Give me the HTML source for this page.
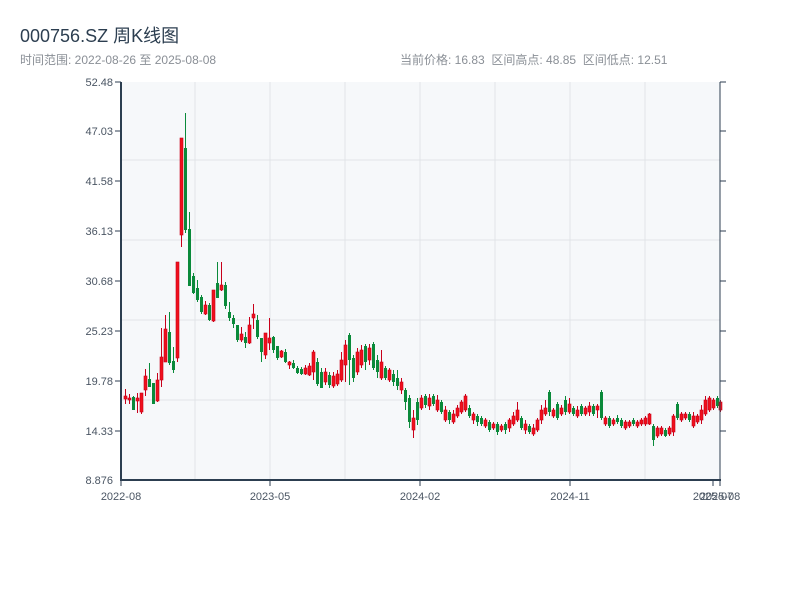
<!DOCTYPE html>
<html><head><meta charset="utf-8"><style>
body{margin:0;background:#fff;width:800px;height:600px;overflow:hidden;font-family:"Liberation Sans","Noto Sans CJK SC",sans-serif;}
.t{position:absolute;left:20px;top:22px;font-size:18px;color:#2c3e50;}
.s{position:absolute;top:51px;font-size:12px;color:#8a8f96;}
svg{position:absolute;left:0;top:0}
.r{fill:#f0101c;stroke:#c8001a;stroke-width:0.6}
.g{fill:#0a8a3a}
.wr{stroke:#c8001a;stroke-width:1}
.wg{stroke:#0a8a3a;stroke-width:1}
.ax{font-size:11px;fill:#4a5563;font-family:"Liberation Sans",sans-serif}
</style></head><body>
<div class="t">000756.SZ 周K线图</div>
<div class="s" style="left:20px">时间范围: 2022-08-26 至 2025-08-08</div>
<div class="s" style="left:400px">当前价格: 16.83&nbsp;&nbsp;区间高点: 48.85&nbsp;&nbsp;区间低点: 12.51</div>
<svg width="800" height="600" xmlns="http://www.w3.org/2000/svg">
<rect x="121" y="82" width="599" height="398" fill="#f6f8fa"/>
<g stroke="#e1e4e8" stroke-width="1">
<line x1="121" x2="720" y1="160" y2="160"/><line x1="121" x2="720" y1="240" y2="240"/><line x1="121" x2="720" y1="320" y2="320"/><line x1="121" x2="720" y1="400" y2="400"/>
<line x1="195" x2="195" y1="82" y2="480"/><line x1="270" x2="270" y1="82" y2="480"/><line x1="345" x2="345" y1="82" y2="480"/><line x1="420" x2="420" y1="82" y2="480"/><line x1="495" x2="495" y1="82" y2="480"/><line x1="570" x2="570" y1="82" y2="480"/><line x1="645" x2="645" y1="82" y2="480"/>
</g>
<g stroke="#2c3e50" stroke-width="1">
<line x1="115" x2="121" y1="82" y2="82"/><line x1="115" x2="121" y1="131" y2="131"/><line x1="115" x2="121" y1="181" y2="181"/><line x1="115" x2="121" y1="231" y2="231"/><line x1="115" x2="121" y1="281" y2="281"/><line x1="115" x2="121" y1="331" y2="331"/><line x1="115" x2="121" y1="381" y2="381"/><line x1="115" x2="121" y1="431" y2="431"/>
<line x1="720" x2="726" y1="82" y2="82"/><line x1="720" x2="726" y1="131" y2="131"/><line x1="720" x2="726" y1="181" y2="181"/><line x1="720" x2="726" y1="231" y2="231"/><line x1="720" x2="726" y1="281" y2="281"/><line x1="720" x2="726" y1="331" y2="331"/><line x1="720" x2="726" y1="381" y2="381"/><line x1="720" x2="726" y1="431" y2="431"/>
<line x1="121" x2="121" y1="480" y2="486"/><line x1="270" x2="270" y1="480" y2="486"/><line x1="420" x2="420" y1="480" y2="486"/><line x1="570" x2="570" y1="480" y2="486"/><line x1="713" x2="713" y1="480" y2="486"/><line x1="720" x2="720" y1="480" y2="486"/>
</g>
<g class="ax" text-anchor="end">
<text x="113" y="86">52.48</text><text x="113" y="135">47.03</text><text x="113" y="185">41.58</text><text x="113" y="235">36.13</text><text x="113" y="285">30.68</text><text x="113" y="335">25.23</text><text x="113" y="385">19.78</text><text x="113" y="435">14.33</text><text x="113" y="484">8.876</text>
</g>
<g class="ax" text-anchor="middle">
<text x="121" y="500">2022-08</text><text x="270" y="500">2023-05</text><text x="420" y="500">2024-02</text><text x="570" y="500">2024-11</text><text x="713" y="500">2025-07</text><text x="720" y="500">2025-08</text>
</g>
<g id="candles">
<line class="wr" x1="125.5" x2="125.5" y1="389" y2="404"/><rect class="r" x="124" y="396" width="3" height="3"/>
<line class="wr" x1="129.5" x2="129.5" y1="394" y2="404"/><rect class="r" x="128" y="398" width="3" height="2"/>
<line class="wg" x1="133.5" x2="133.5" y1="396" y2="410"/><rect class="g" x="132" y="397" width="3" height="13"/>
<line class="wr" x1="137.5" x2="137.5" y1="393" y2="413"/><rect class="r" x="136" y="398" width="3" height="3"/>
<line class="wr" x1="141.5" x2="141.5" y1="393" y2="414"/><rect class="r" x="140" y="393" width="3" height="19"/>
<line class="wr" x1="145.5" x2="145.5" y1="369" y2="396"/><rect class="r" x="144" y="376" width="3" height="14"/>
<line class="wg" x1="149.5" x2="149.5" y1="363" y2="387"/><rect class="g" x="148" y="379" width="3" height="8"/>
<line class="wg" x1="153.5" x2="153.5" y1="383" y2="404"/><rect class="g" x="152" y="383" width="3" height="21"/>
<line class="wr" x1="157.5" x2="157.5" y1="373" y2="402"/><rect class="r" x="156" y="380" width="3" height="21"/>
<line class="wr" x1="161.5" x2="161.5" y1="328" y2="387"/><rect class="r" x="160" y="357" width="3" height="23"/>
<line class="wr" x1="165.5" x2="165.5" y1="315" y2="362"/><rect class="r" x="164" y="329" width="3" height="33"/>
<line class="wg" x1="169.5" x2="169.5" y1="312" y2="365"/><rect class="g" x="168" y="332" width="3" height="31"/>
<line class="wg" x1="173.5" x2="173.5" y1="347" y2="373"/><rect class="g" x="172" y="361" width="3" height="9"/>
<line class="wr" x1="177.5" x2="177.5" y1="262" y2="362"/><rect class="r" x="176" y="262" width="3" height="96"/>
<line class="wr" x1="181.5" x2="181.5" y1="138" y2="247"/><rect class="r" x="180" y="138" width="3" height="97"/>
<line class="wg" x1="185.5" x2="185.5" y1="113" y2="233"/><rect class="g" x="184" y="148" width="3" height="82"/>
<line class="wg" x1="189.5" x2="189.5" y1="212" y2="286"/><rect class="g" x="188" y="229" width="3" height="57"/>
<line class="wg" x1="193.5" x2="193.5" y1="273" y2="294"/><rect class="g" x="192" y="276" width="3" height="17"/>
<line class="wg" x1="197.5" x2="197.5" y1="280" y2="302"/><rect class="g" x="196" y="288" width="3" height="12"/>
<line class="wg" x1="201.5" x2="201.5" y1="295" y2="314"/><rect class="g" x="200" y="297" width="3" height="15"/>
<line class="wr" x1="205.5" x2="205.5" y1="301" y2="315"/><rect class="r" x="204" y="305" width="3" height="9"/>
<line class="wg" x1="209.5" x2="209.5" y1="303" y2="321"/><rect class="g" x="208" y="305" width="3" height="15"/>
<line class="wr" x1="213.5" x2="213.5" y1="290" y2="322"/><rect class="r" x="212" y="290" width="3" height="31"/>
<line class="wg" x1="217.5" x2="217.5" y1="262" y2="298"/><rect class="g" x="216" y="283" width="3" height="15"/>
<line class="wr" x1="221.5" x2="221.5" y1="262" y2="291"/><rect class="r" x="220" y="285" width="3" height="5"/>
<line class="wg" x1="225.5" x2="225.5" y1="282" y2="309"/><rect class="g" x="224" y="285" width="3" height="21"/>
<line class="wg" x1="229.5" x2="229.5" y1="302" y2="321"/><rect class="g" x="228" y="312" width="3" height="6"/>
<line class="wg" x1="233.5" x2="233.5" y1="315" y2="328"/><rect class="g" x="232" y="318" width="3" height="6"/>
<line class="wg" x1="237.5" x2="237.5" y1="325" y2="342"/><rect class="g" x="236" y="325" width="3" height="15"/>
<line class="wr" x1="241.5" x2="241.5" y1="327" y2="342"/><rect class="r" x="240" y="334" width="3" height="6"/>
<line class="wg" x1="245.5" x2="245.5" y1="332" y2="348"/><rect class="g" x="244" y="337" width="3" height="6"/>
<line class="wr" x1="249.5" x2="249.5" y1="317" y2="344"/><rect class="r" x="248" y="325" width="3" height="18"/>
<line class="wr" x1="253.5" x2="253.5" y1="304" y2="329"/><rect class="r" x="252" y="314" width="3" height="4"/>
<line class="wg" x1="257.5" x2="257.5" y1="315" y2="339"/><rect class="g" x="256" y="320" width="3" height="17"/>
<line class="wg" x1="261.5" x2="261.5" y1="338" y2="362"/><rect class="g" x="260" y="338" width="3" height="14"/>
<line class="wr" x1="265.5" x2="265.5" y1="333" y2="359"/><rect class="r" x="264" y="333" width="3" height="22"/>
<line class="wr" x1="269.5" x2="269.5" y1="318" y2="350"/><rect class="r" x="268" y="338" width="3" height="5"/>
<line class="wg" x1="273.5" x2="273.5" y1="336" y2="353"/><rect class="g" x="272" y="337" width="3" height="13"/>
<line class="wg" x1="277.5" x2="277.5" y1="346" y2="360"/><rect class="g" x="276" y="346" width="3" height="12"/>
<line class="wr" x1="281.5" x2="281.5" y1="350" y2="358"/><rect class="r" x="280" y="351" width="3" height="6"/>
<line class="wg" x1="285.5" x2="285.5" y1="349" y2="363"/><rect class="g" x="284" y="352" width="3" height="10"/>
<line class="wr" x1="289.5" x2="289.5" y1="361" y2="369"/><rect class="r" x="288" y="362" width="3" height="3"/>
<line class="wg" x1="293.5" x2="293.5" y1="360" y2="369"/><rect class="g" x="292" y="363" width="3" height="5"/>
<line class="wg" x1="297.5" x2="297.5" y1="366" y2="374"/><rect class="g" x="296" y="368" width="3" height="5"/>
<line class="wg" x1="301.5" x2="301.5" y1="367" y2="375"/><rect class="g" x="300" y="369" width="3" height="5"/>
<line class="wr" x1="305.5" x2="305.5" y1="365" y2="375"/><rect class="r" x="304" y="368" width="3" height="6"/>
<line class="wr" x1="309.5" x2="309.5" y1="363" y2="376"/><rect class="r" x="308" y="366" width="3" height="9"/>
<line class="wr" x1="313.5" x2="313.5" y1="350" y2="380"/><rect class="r" x="312" y="352" width="3" height="20"/>
<line class="wg" x1="317.5" x2="317.5" y1="358" y2="386"/><rect class="g" x="316" y="362" width="3" height="22"/>
<line class="wg" x1="321.5" x2="321.5" y1="368" y2="388"/><rect class="g" x="320" y="372" width="3" height="16"/>
<line class="wr" x1="325.5" x2="325.5" y1="368" y2="385"/><rect class="r" x="324" y="372" width="3" height="10"/>
<line class="wg" x1="329.5" x2="329.5" y1="372" y2="388"/><rect class="g" x="328" y="375" width="3" height="10"/>
<line class="wr" x1="333.5" x2="333.5" y1="372" y2="388"/><rect class="r" x="332" y="376" width="3" height="10"/>
<line class="wr" x1="337.5" x2="337.5" y1="370" y2="386"/><rect class="r" x="336" y="374" width="3" height="10"/>
<line class="wr" x1="341.5" x2="341.5" y1="352" y2="382"/><rect class="r" x="340" y="360" width="3" height="20"/>
<line class="wr" x1="345.5" x2="345.5" y1="340" y2="382"/><rect class="r" x="344" y="345" width="3" height="20"/>
<line class="wg" x1="349.5" x2="349.5" y1="333" y2="385"/><rect class="g" x="348" y="335" width="3" height="25"/>
<line class="wg" x1="353.5" x2="353.5" y1="355" y2="382"/><rect class="g" x="352" y="358" width="3" height="20"/>
<line class="wr" x1="357.5" x2="357.5" y1="348" y2="375"/><rect class="r" x="356" y="352" width="3" height="20"/>
<line class="wr" x1="361.5" x2="361.5" y1="345" y2="368"/><rect class="r" x="360" y="350" width="3" height="15"/>
<line class="wg" x1="365.5" x2="365.5" y1="344" y2="370"/><rect class="g" x="364" y="346" width="3" height="16"/>
<line class="wr" x1="369.5" x2="369.5" y1="344" y2="365"/><rect class="r" x="368" y="348" width="3" height="12"/>
<line class="wg" x1="373.5" x2="373.5" y1="342" y2="370"/><rect class="g" x="372" y="344" width="3" height="24"/>
<line class="wg" x1="377.5" x2="377.5" y1="355" y2="378"/><rect class="g" x="376" y="360" width="3" height="12"/>
<line class="wr" x1="381.5" x2="381.5" y1="350" y2="380"/><rect class="r" x="380" y="362" width="3" height="16"/>
<line class="wg" x1="385.5" x2="385.5" y1="366" y2="380"/><rect class="g" x="384" y="368" width="3" height="10"/>
<line class="wr" x1="389.5" x2="389.5" y1="368" y2="382"/><rect class="r" x="388" y="370" width="3" height="10"/>
<line class="wg" x1="393.5" x2="393.5" y1="370" y2="386"/><rect class="g" x="392" y="374" width="3" height="8"/>
<line class="wg" x1="397.5" x2="397.5" y1="370" y2="390"/><rect class="g" x="396" y="378" width="3" height="8"/>
<line class="wr" x1="401.5" x2="401.5" y1="378" y2="394"/><rect class="r" x="400" y="382" width="3" height="8"/>
<line class="wg" x1="405.5" x2="405.5" y1="388" y2="410"/><rect class="g" x="404" y="390" width="3" height="12"/>
<line class="wg" x1="409.5" x2="409.5" y1="395" y2="428"/><rect class="g" x="408" y="398" width="3" height="24"/>
<line class="wr" x1="413.5" x2="413.5" y1="410" y2="438"/><rect class="r" x="412" y="418" width="3" height="12"/>
<line class="wg" x1="417.5" x2="417.5" y1="398" y2="425"/><rect class="g" x="416" y="402" width="3" height="18"/>
<line class="wr" x1="421.5" x2="421.5" y1="395" y2="410"/><rect class="r" x="420" y="398" width="3" height="10"/>
<line class="wg" x1="425.5" x2="425.5" y1="394" y2="408"/><rect class="g" x="424" y="396" width="3" height="9"/>
<line class="wr" x1="429.5" x2="429.5" y1="394" y2="410"/><rect class="r" x="428" y="398" width="3" height="8"/>
<line class="wg" x1="433.5" x2="433.5" y1="394" y2="406"/><rect class="g" x="432" y="396" width="3" height="8"/>
<line class="wr" x1="437.5" x2="437.5" y1="395" y2="412"/><rect class="r" x="436" y="400" width="3" height="10"/>
<line class="wg" x1="441.5" x2="441.5" y1="400" y2="414"/><rect class="g" x="440" y="402" width="3" height="10"/>
<line class="wr" x1="445.5" x2="445.5" y1="406" y2="422"/><rect class="r" x="444" y="410" width="3" height="10"/>
<line class="wg" x1="449.5" x2="449.5" y1="410" y2="424"/><rect class="g" x="448" y="412" width="3" height="8"/>
<line class="wr" x1="453.5" x2="453.5" y1="410" y2="424"/><rect class="r" x="452" y="414" width="3" height="8"/>
<line class="wr" x1="457.5" x2="457.5" y1="405" y2="418"/><rect class="r" x="456" y="408" width="3" height="8"/>
<line class="wr" x1="461.5" x2="461.5" y1="400" y2="414"/><rect class="r" x="460" y="402" width="3" height="10"/>
<line class="wr" x1="465.5" x2="465.5" y1="394" y2="412"/><rect class="r" x="464" y="396" width="3" height="14"/>
<line class="wg" x1="469.5" x2="469.5" y1="405" y2="418"/><rect class="g" x="468" y="408" width="3" height="8"/>
<line class="wr" x1="473.5" x2="473.5" y1="412" y2="424"/><rect class="r" x="472" y="414" width="3" height="6"/>
<line class="wg" x1="477.5" x2="477.5" y1="414" y2="426"/><rect class="g" x="476" y="416" width="3" height="6"/>
<line class="wg" x1="481.5" x2="481.5" y1="416" y2="426"/><rect class="g" x="480" y="418" width="3" height="6"/>
<line class="wr" x1="485.5" x2="485.5" y1="418" y2="428"/><rect class="r" x="484" y="420" width="3" height="6"/>
<line class="wg" x1="489.5" x2="489.5" y1="420" y2="432"/><rect class="g" x="488" y="422" width="3" height="8"/>
<line class="wr" x1="493.5" x2="493.5" y1="422" y2="430"/><rect class="r" x="492" y="424" width="3" height="4"/>
<line class="wg" x1="497.5" x2="497.5" y1="422" y2="435"/><rect class="g" x="496" y="424" width="3" height="8"/>
<line class="wr" x1="501.5" x2="501.5" y1="424" y2="432"/><rect class="r" x="500" y="426" width="3" height="4"/>
<line class="wg" x1="505.5" x2="505.5" y1="422" y2="434"/><rect class="g" x="504" y="424" width="3" height="6"/>
<line class="wr" x1="509.5" x2="509.5" y1="418" y2="432"/><rect class="r" x="508" y="420" width="3" height="8"/>
<line class="wr" x1="513.5" x2="513.5" y1="412" y2="426"/><rect class="r" x="512" y="416" width="3" height="8"/>
<line class="wr" x1="517.5" x2="517.5" y1="402" y2="422"/><rect class="r" x="516" y="410" width="3" height="10"/>
<line class="wg" x1="521.5" x2="521.5" y1="416" y2="430"/><rect class="g" x="520" y="418" width="3" height="10"/>
<line class="wr" x1="525.5" x2="525.5" y1="420" y2="434"/><rect class="r" x="524" y="424" width="3" height="6"/>
<line class="wg" x1="529.5" x2="529.5" y1="424" y2="434"/><rect class="g" x="528" y="426" width="3" height="6"/>
<line class="wr" x1="533.5" x2="533.5" y1="424" y2="436"/><rect class="r" x="532" y="428" width="3" height="6"/>
<line class="wr" x1="537.5" x2="537.5" y1="418" y2="432"/><rect class="r" x="536" y="420" width="3" height="10"/>
<line class="wr" x1="541.5" x2="541.5" y1="405" y2="424"/><rect class="r" x="540" y="410" width="3" height="10"/>
<line class="wr" x1="545.5" x2="545.5" y1="400" y2="416"/><rect class="r" x="544" y="408" width="3" height="6"/>
<line class="wg" x1="549.5" x2="549.5" y1="390" y2="416"/><rect class="g" x="548" y="392" width="3" height="20"/>
<line class="wr" x1="553.5" x2="553.5" y1="408" y2="418"/><rect class="r" x="552" y="410" width="3" height="6"/>
<line class="wg" x1="557.5" x2="557.5" y1="402" y2="420"/><rect class="g" x="556" y="404" width="3" height="14"/>
<line class="wr" x1="561.5" x2="561.5" y1="405" y2="416"/><rect class="r" x="560" y="408" width="3" height="6"/>
<line class="wg" x1="565.5" x2="565.5" y1="396" y2="415"/><rect class="g" x="564" y="400" width="3" height="12"/>
<line class="wr" x1="569.5" x2="569.5" y1="398" y2="414"/><rect class="r" x="568" y="404" width="3" height="8"/>
<line class="wg" x1="573.5" x2="573.5" y1="406" y2="416"/><rect class="g" x="572" y="408" width="3" height="6"/>
<line class="wr" x1="577.5" x2="577.5" y1="406" y2="418"/><rect class="r" x="576" y="410" width="3" height="6"/>
<line class="wg" x1="581.5" x2="581.5" y1="404" y2="416"/><rect class="g" x="580" y="406" width="3" height="8"/>
<line class="wr" x1="585.5" x2="585.5" y1="406" y2="416"/><rect class="r" x="584" y="408" width="3" height="6"/>
<line class="wr" x1="589.5" x2="589.5" y1="402" y2="416"/><rect class="r" x="588" y="406" width="3" height="6"/>
<line class="wg" x1="593.5" x2="593.5" y1="404" y2="416"/><rect class="g" x="592" y="406" width="3" height="8"/>
<line class="wr" x1="597.5" x2="597.5" y1="404" y2="418"/><rect class="r" x="596" y="406" width="3" height="4"/>
<line class="wg" x1="601.5" x2="601.5" y1="390" y2="420"/><rect class="g" x="600" y="392" width="3" height="26"/>
<line class="wr" x1="605.5" x2="605.5" y1="416" y2="426"/><rect class="r" x="604" y="418" width="3" height="6"/>
<line class="wg" x1="609.5" x2="609.5" y1="416" y2="428"/><rect class="g" x="608" y="418" width="3" height="8"/>
<line class="wr" x1="613.5" x2="613.5" y1="418" y2="426"/><rect class="r" x="612" y="420" width="3" height="4"/>
<line class="wg" x1="617.5" x2="617.5" y1="415" y2="424"/><rect class="g" x="616" y="418" width="3" height="4"/>
<line class="wg" x1="621.5" x2="621.5" y1="418" y2="428"/><rect class="g" x="620" y="420" width="3" height="6"/>
<line class="wr" x1="625.5" x2="625.5" y1="420" y2="430"/><rect class="r" x="624" y="422" width="3" height="6"/>
<line class="wr" x1="629.5" x2="629.5" y1="420" y2="428"/><rect class="r" x="628" y="422" width="3" height="4"/>
<line class="wg" x1="633.5" x2="633.5" y1="418" y2="426"/><rect class="g" x="632" y="420" width="3" height="4"/>
<line class="wr" x1="637.5" x2="637.5" y1="420" y2="428"/><rect class="r" x="636" y="422" width="3" height="4"/>
<line class="wr" x1="641.5" x2="641.5" y1="418" y2="426"/><rect class="r" x="640" y="420" width="3" height="4"/>
<line class="wr" x1="645.5" x2="645.5" y1="416" y2="426"/><rect class="r" x="644" y="418" width="3" height="6"/>
<line class="wr" x1="649.5" x2="649.5" y1="413" y2="425"/><rect class="r" x="648" y="414" width="3" height="10"/>
<line class="wg" x1="653.5" x2="653.5" y1="424" y2="446"/><rect class="g" x="652" y="426" width="3" height="14"/>
<line class="wr" x1="657.5" x2="657.5" y1="426" y2="438"/><rect class="r" x="656" y="428" width="3" height="8"/>
<line class="wr" x1="661.5" x2="661.5" y1="426" y2="436"/><rect class="r" x="660" y="428" width="3" height="6"/>
<line class="wg" x1="665.5" x2="665.5" y1="428" y2="437"/><rect class="g" x="664" y="430" width="3" height="6"/>
<line class="wr" x1="669.5" x2="669.5" y1="426" y2="436"/><rect class="r" x="668" y="428" width="3" height="6"/>
<line class="wr" x1="673.5" x2="673.5" y1="414" y2="436"/><rect class="r" x="672" y="416" width="3" height="16"/>
<line class="wg" x1="677.5" x2="677.5" y1="402" y2="420"/><rect class="g" x="676" y="404" width="3" height="14"/>
<line class="wr" x1="681.5" x2="681.5" y1="412" y2="422"/><rect class="r" x="680" y="414" width="3" height="6"/>
<line class="wr" x1="685.5" x2="685.5" y1="412" y2="420"/><rect class="r" x="684" y="414" width="3" height="4"/>
<line class="wg" x1="689.5" x2="689.5" y1="412" y2="422"/><rect class="g" x="688" y="414" width="3" height="6"/>
<line class="wr" x1="693.5" x2="693.5" y1="412" y2="428"/><rect class="r" x="692" y="416" width="3" height="10"/>
<line class="wr" x1="697.5" x2="697.5" y1="414" y2="424"/><rect class="r" x="696" y="416" width="3" height="6"/>
<line class="wr" x1="701.5" x2="701.5" y1="405" y2="424"/><rect class="r" x="700" y="410" width="3" height="10"/>
<line class="wr" x1="705.5" x2="705.5" y1="396" y2="416"/><rect class="r" x="704" y="400" width="3" height="14"/>
<line class="wr" x1="709.5" x2="709.5" y1="396" y2="412"/><rect class="r" x="708" y="398" width="3" height="12"/>
<line class="wr" x1="713.5" x2="713.5" y1="398" y2="410"/><rect class="r" x="712" y="400" width="3" height="8"/>
<line class="wg" x1="717.5" x2="717.5" y1="396" y2="408"/><rect class="g" x="716" y="398" width="3" height="8"/>
<line class="wr" x1="720.5" x2="720.5" y1="400" y2="412"/><rect class="r" x="719" y="402" width="3" height="8"/>
</g>
<line x1="121" x2="121" y1="82" y2="481" stroke="#2c3e50" stroke-width="2"/>
<line x1="720" x2="720" y1="82" y2="481" stroke="#2c3e50" stroke-width="1"/>
<line x1="120" x2="721" y1="480" y2="480" stroke="#2c3e50" stroke-width="2"/>
</svg>
</body></html>
